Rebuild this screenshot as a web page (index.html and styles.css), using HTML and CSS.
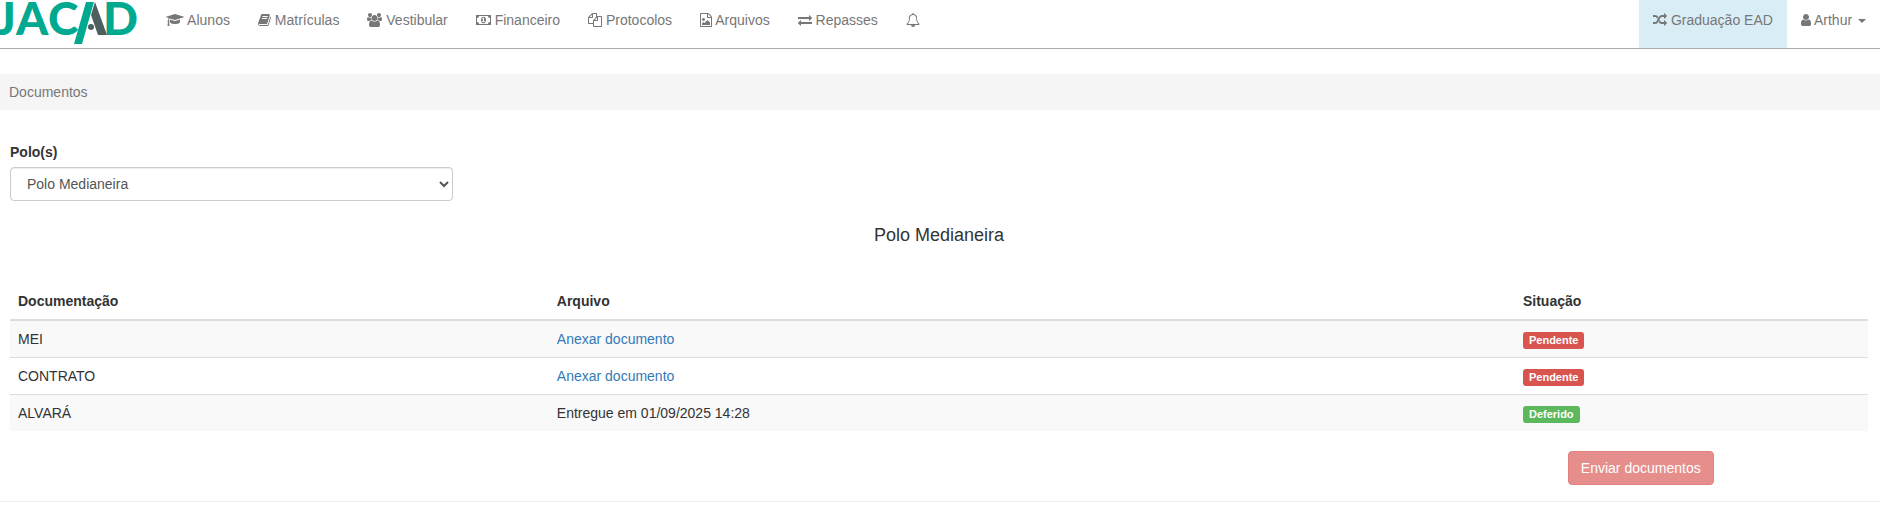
FILE: index.html
```html
<!DOCTYPE html>
<html lang="pt-BR">
<head>
    <meta charset="UTF-8">
    <meta name="viewport" content="width=device-width, initial-scale=1.0">
    <title>Documentos</title>
    <link rel="stylesheet" href="styles.css">
</head>
<body>
    <nav class="navbar">
        <a class="brand" href="#" aria-label="JACAD">
            <svg class="logo" width="138" height="48" viewBox="0 0 138 48">
                <text class="logo-text" y="35"><tspan x="-4">J</tspan><tspan x="16">A</tspan><tspan x="48">C</tspan><tspan x="103">D</tspan></text>
                <polygon class="logo-slash" points="86,2 94,2 82,44 74,44"/>
                <polygon class="logo-leg" points="95,2 107,35 98,35 91,15"/>
                <circle class="logo-leg" cx="91" cy="27" r="3"/>
            </svg>
        </a>
        <ul class="nav">
            <li><a href="#"><svg class="icon" viewBox="0 0 2304 1792"><path d="M1774 836l18 316q4 69-82 128t-235 93.500-323 34.500-323-34.500-235-93.500-82-128l18-316 574 181q22 7 48 7t48-7zm530-324q0 23-22 31l-1120 352q-4 1-10 1t-10-1l-652-206q-43 34-71 111.500t-34 178.500q63 36 63 109 0 69-58 107l58 433q2 14-8 25-9 11-24 11h-192q-15 0-24-11-10-11-8-25l58-433q-58-38-58-107 0-73 65-111 11-207 98-330l-333-104q-22-8-22-31t22-31l1120-352q4-1 10-1t10 1l1120 352q22 8 22 31z"/></svg> Alunos</a></li>
            <li><a href="#"><svg class="icon" viewBox="64 0 1664 1792"><path d="M1703 478q40 57 18 129l-275 906q-19 64-76.500 107.500t-122.500 43.500h-923q-77 0-148.500-53.500t-99.500-131.500q-24-67-2-127 0-4 3-27t4-37q1-8-3-21.500t-3-19.500q2-11 8-21t16.500-23.500 16.500-23.500q23-38 45-91.500t30-91.500q3-10 .5-30t-.5-28q3-11 17-28t17-23q21-36 42-92t25-90q1-9-2.500-32t.5-28q4-13 22-30.500t22-22.500q19-26 42.500-84.500t27.500-96.500q1-8-3-25.500t-2-26.500q2-8 9-18t18-23 17-21q8-12 16.500-30.500t15-35 16-36 19.500-32 26.500-23.500 36-11.500 47.500 5.500l-1 3q38-9 51-9h761q74 0 114 56t18 130l-274 906q-36 119-71.500 153.500t-128.500 34.500h-869q-27 0-38 15-11 16-1 43 24 70 144 70h923q29 0 56-15.500t35-41.500l300-987q7-22 5-57 38 15 59 43zm-1064 2q-4 13 2 22.500t20 9.500h608q13 0 25.500-9.500t16.500-22.500l21-64q4-13-2-22.500t-20-9.500h-608q-13 0-25.500 9.500t-16.500 22.500zm-83 256q-4 13 2 22.500t20 9.500h608q13 0 25.500-9.500t16.500-22.500l21-64q4-13-2-22.500t-20-9.500h-608q-13 0-25.500 9.500t-16.500 22.500z"/></svg> Matrículas</a></li>
            <li><a href="#"><svg class="icon" viewBox="0 0 1920 1792"><path d="M593 896q-162 5-265 128h-134q-82 0-138-40.500t-56-118.500q0-353 124-353 6 0 43.500 21t97.500 42.500 119 21.500q67 0 133-23-5 37-5 66 0 139 81 256zm1071 637q0 120-73 189.500t-194 69.500h-874q-121 0-194-69.500t-73-189.500q0-53 3.500-103.500t14-109 26.500-108.500 43-97.500 62-81 85.500-53.500 111.500-20q10 0 43 21.500t73 48 107 48 135 21.500 135-21.500 107-48 73-48 43-21.500q61 0 111.500 20t85.500 53.500 62 81 43 97.500 26.500 108.500 14 109 3.500 103.500zm-1024-1277q0 106-75 181t-181 75-181-75-75-181 75-181 181-75 181 75 75 181zm704 384q0 159-112.500 271.500t-271.500 112.500-271.500-112.500-112.500-271.500 112.500-271.500 271.500-112.500 271.500 112.500 112.500 271.500zm576 225q0 78-56 118.500t-138 40.500h-134q-103-123-265-128 81-117 81-256 0-29-5-66 66 23 133 23 59 0 119-21.500t97.500-42.500 43.500-21q124 0 124 353zm-128-609q0 106-75 181t-181 75-181-75-75-181 75-181 181-75 181 75 75 181z"/></svg> Vestibular</a></li>
            <li><a href="#"><svg class="icon" viewBox="0 0 1920 1792"><path d="M768 1152h384v-96h-128v-448h-114l-148 137 77 80q42-37 55-57h2v288h-128v96zm512-256q0 70-21 142t-59.500 134-101.500 101-138 39-138-39-101.500-101-59.500-134-21-142 21-142 59.500-134 101.500-101 138-39 138 39 101.500 101 59.500 134 21 142zm512 256v-512q-106 0-181-75t-75-181h-1152q0 106-75 181t-181 75v512q106 0 181 75t75 181h1152q0-106 75-181t181-75zm128-832v1152q0 26-19 45t-45 19h-1792q-26 0-45-19t-19-45v-1152q0-26 19-45t45-19h1792q26 0 45 19t19 45z"/></svg> Financeiro</a></li>
            <li><a href="#"><svg class="icon" viewBox="0 0 1792 1792"><path d="M1696 384q40 0 68 28t28 68v1216q0 40-28 68t-68 28h-960q-40 0-68-28t-28-68v-288h-544q-40 0-68-28t-28-68v-672q0-40 20-88t48-76l408-408q28-28 76-48t88-20h416q40 0 68 28t28 68v328q68-40 128-40h416zm-544 213l-299 299h299v-299zm-640-384l-299 299h299v-299zm196 647l316-316v-416h-384v416q0 40-28 68t-68 28h-416v640h512v-256q0-40 20-88t48-76zm956 804v-1152h-384v416q0 40-28 68t-68 28h-416v640h896z"/></svg> Protocolos</a></li>
            <li><a href="#"><svg class="icon" viewBox="128 0 1536 1792"><path d="M1596 380q28 28 48 76t20 88v1152q0 40-28 68t-68 28h-1344q-40 0-68-28t-28-68v-1600q0-40 28-68t68-28h896q40 0 88 20t76 48zm-444-244v376h376q-10-29-22-41l-313-313q-12-12-41-22zm384 1528v-1024h-416q-40 0-68-28t-28-68v-416h-768v1536h1280zm-128-448v320h-1024v-192l192-192 128 128 384-384zm-832-192q-80 0-136-56t-56-136 56-136 136-56 136 56 56 136-56 136-136 56z"/></svg> Arquivos</a></li>
            <li><a href="#"><svg class="icon" viewBox="0 0 1792 1792"><path d="M1792 1184v192q0 13-9.500 22.500t-22.500 9.500h-1376v192q0 13-9.500 22.500t-22.500 9.500q-12 0-24-10l-319-320q-9-9-9-22 0-14 9-23l320-320q9-9 23-9 13 0 22.500 9.500t9.500 22.500v192h1376q13 0 22.500 9.500t9.500 22.500zm0-544q0 14-9 23l-320 320q-9 9-23 9-13 0-22.500-9.500t-9.500-22.500v-192h-1376q-13 0-22.500-9.500t-9.500-22.500v-192q0-13 9.500-22.500t22.500-9.500h1376v-192q0-14 9-23t23-9q12 0 24 10l319 319q9 9 9 23z"/></svg> Repasses</a></li>
            <li><a href="#" aria-label="Notificações"><svg class="icon" viewBox="0 0 1792 1792"><path d="M912 1696q0-16-16-16-59 0-101.500-42.500t-42.500-101.500q0-16-16-16t-16 16q0 73 51.500 124.500t124.500 51.500q16 0 16-16zm-666-288h1300q-266-300-266-832 0-51-24-105t-69-103-121.500-80.500-169.500-31.500-169.500 31.500-121.500 80.500-69 103-24 105q0 532-266 832zm1482 0q0 52-38 90t-90 38h-448q0 106-75 181t-181 75-181-75-75-181h-448q-52 0-90-38t-38-90q50-42 91-88t85-119.500 74.500-158.500 50-206 19.500-260q0-152 117-282.500t307-158.500q-8-19-8-39 0-40 28-68t68-28 68 28 28 68q0 20-8 39 190 28 307 158.500t117 282.500q0 139 19.500 260t50 206 74.500 158.500 85 119.500 91 88z"/></svg></a></li>
        </ul>
        <ul class="nav nav-right">
            <li class="active"><a href="#"><svg class="icon" viewBox="0 0 1792 1792"><path d="M666 481q-60 92-137 273-22-45-37-72.500t-40.500-63.500-51-56.500-63-35-81.500-14.500h-224q-14 0-23-9t-9-23v-192q0-14 9-23t23-9h224q250 0 410 225zm1126 799q0 14-9 23l-320 320q-9 9-23 9-13 0-22.500-9.500t-9.500-22.500v-192q-32 0-85 .5t-81 1-73-1-71-5-64-10.500-63-18.500-58-28.500-59-40-55-53.500-56-69.500q59-93 136-273 22 45 37 72.500t40.500 63.500 51 56.500 63 35 81.500 14.500h256v-192q0-14 9-23t23-9q12 0 24 10l319 319q9 9 9 23zm0-896q0 14-9 23l-320 320q-9 9-23 9-13 0-22.500-9.500t-9.500-22.500v-192h-256q-48 0-87 15t-69 45-51 61.500-45 77.500q-32 62-78 171-29 66-49.500 111t-54 105-64 100-74 83-90 68.500-106.500 42-128 16.500h-224q-14 0-23-9t-9-23v-192q0-14 9-23t23-9h224q48 0 87-15t69-45 51-61.500 45-77.500q32-62 78-171 29-66 49.500-111t54-105 64-100 74-83 90-68.500 106.500-42 128-16.500h256v-192q0-14 9-23t23-9q12 0 24 10l319 319q9 9 9 23z"/></svg> Graduação EAD</a></li>
            <li><a href="#"><svg class="icon" viewBox="256 0 1280 1792"><path d="M1536 1399q0 109-62.500 187t-150.500 78h-854q-88 0-150.500-78t-62.500-187q0-85 8.500-160.500t31.500-152 58.500-131 94-89 134.500-34.500q131 128 313 128t313-128q76 0 134.500 34.500t94 89 58.500 131 31.500 152 8.500 160.500zm-256-887q0 159-112.500 271.500t-271.500 112.500-271.500-112.500-112.500-271.500 112.500-271.500 271.500-112.500 271.500 112.500 112.500 271.500z"/></svg> Arthur <span class="caret"></span></a></li>
        </ul>
    </nav>

    <div class="breadcrumb">Documentos</div>

    <main class="container">
        <div class="form-group col-quarter">
            <label for="polo">Polo(s)</label>
            <select id="polo" class="form-control">
                <option>Polo Medianeira</option>
            </select>
        </div>

        <h4 class="title">Polo Medianeira</h4>

        <table class="table">
            <thead>
                <tr>
                    <th class="col-doc">Documentação</th>
                    <th class="col-file">Arquivo</th>
                    <th>Situação</th>
                </tr>
            </thead>
            <tbody>
                <tr>
                    <td>MEI</td>
                    <td><a href="#">Anexar documento</a></td>
                    <td><span class="label label-danger">Pendente</span></td>
                </tr>
                <tr>
                    <td>CONTRATO</td>
                    <td><a href="#">Anexar documento</a></td>
                    <td><span class="label label-danger">Pendente</span></td>
                </tr>
                <tr>
                    <td>ALVARÁ</td>
                    <td>Entregue em 01/09/2025 14:28</td>
                    <td><span class="label label-success">Deferido</span></td>
                </tr>
            </tbody>
        </table>

        <div class="actions col-quarter">
            <button class="btn" type="button" disabled>Enviar documentos</button>
        </div>
    </main>

    <hr class="divider">
</body>
</html>
```

FILE: styles.css
```css
* {
    box-sizing: border-box;
}

body {
    margin: 0;
    background-color: #fff;
    color: #333;
    font-family: "Liberation Sans", Arial, sans-serif;
    font-size: 14px;
    line-height: 20px;
}

a {
    color: #337ab7;
    text-decoration: none;
}

/* Navbar */
.navbar {
    display: flex;
    border-bottom: 1px solid #aaa;
}

.brand {
    margin-right: 14px;
}

.logo {
    display: block;
}

.logo-text {
    font-family: Lato, sans-serif;
    font-size: 46px;
    font-weight: 900;
    fill: #00a98f;
}

.logo-slash {
    fill: #00a98f;
}

.logo-leg {
    fill: #4d6061;
}

.nav {
    display: flex;
    margin: 0;
    padding: 0;
    list-style: none;
}

.nav-right {
    margin-left: auto;
}

.nav a {
    display: block;
    height: 100%;
    padding: 10px 14px;
    color: #777;
    white-space: nowrap;
}

.nav .active {
    background-color: #d9edf7;
}

.icon {
    height: 14px;
    vertical-align: -2px;
    fill: currentColor;
}

.caret {
    display: inline-block;
    margin-left: 2px;
    vertical-align: middle;
    border-top: 4px solid;
    border-right: 4px solid transparent;
    border-left: 4px solid transparent;
}

.breadcrumb {
    margin-top: 25px;
    padding: 8px 9px;
    background-color: #f5f5f5;
    color: #777;
}

/* Content */
.container {
    padding: 32px 12px 0 10px;
}

.col-quarter {
    width: calc(25% - 10px);
}

.form-group {
    padding-right: 12px;
}

.form-group label {
    display: block;
    margin-bottom: 5px;
    font-weight: bold;
}

.form-control {
    display: block;
    width: 100%;
    height: 34px;
    padding: 6px 12px;
    border: 1px solid #ccc;
    border-radius: 4px;
    background-color: #fff;
    box-shadow: inset 0 1px 1px rgba(0, 0, 0, 0.075);
    color: #555;
    font: inherit;
}

.title {
    margin: 24px 0 38px;
    font-size: 18px;
    font-weight: normal;
    text-align: center;
}

.table {
    width: 100%;
    border-collapse: collapse;
}

.table th,
.table td {
    padding: 8px;
    text-align: left;
    vertical-align: top;
}

.table th {
    border-bottom: 2px solid #ddd;
}

.table td {
    border-top: 1px solid #ddd;
}

.table .col-doc {
    width: 29%;
}

.table .col-file {
    width: 52%;
}

.table tbody tr:nth-child(odd) {
    background-color: #f9f9f9;
}

.label {
    display: inline-block;
    padding: 3px 6px;
    border-radius: 3px;
    color: #fff;
    font-size: 11px;
    font-weight: bold;
    line-height: 11px;
}

.label-danger {
    background-color: #d9534f;
}

.label-success {
    background-color: #5cb85c;
}

.actions {
    display: flex;
    justify-content: center;
    margin: 20px 0 0 auto;
}

.btn {
    padding: 6px 12px;
    border: 1px solid #d43f3a;
    border-radius: 4px;
    background-color: #d9534f;
    color: #fff;
    font: inherit;
    cursor: pointer;
}

.btn:disabled {
    opacity: 0.65;
    cursor: not-allowed;
}

.divider {
    margin: 16px 0 0;
    border: 0;
    border-top: 1px solid #eee;
}
```
